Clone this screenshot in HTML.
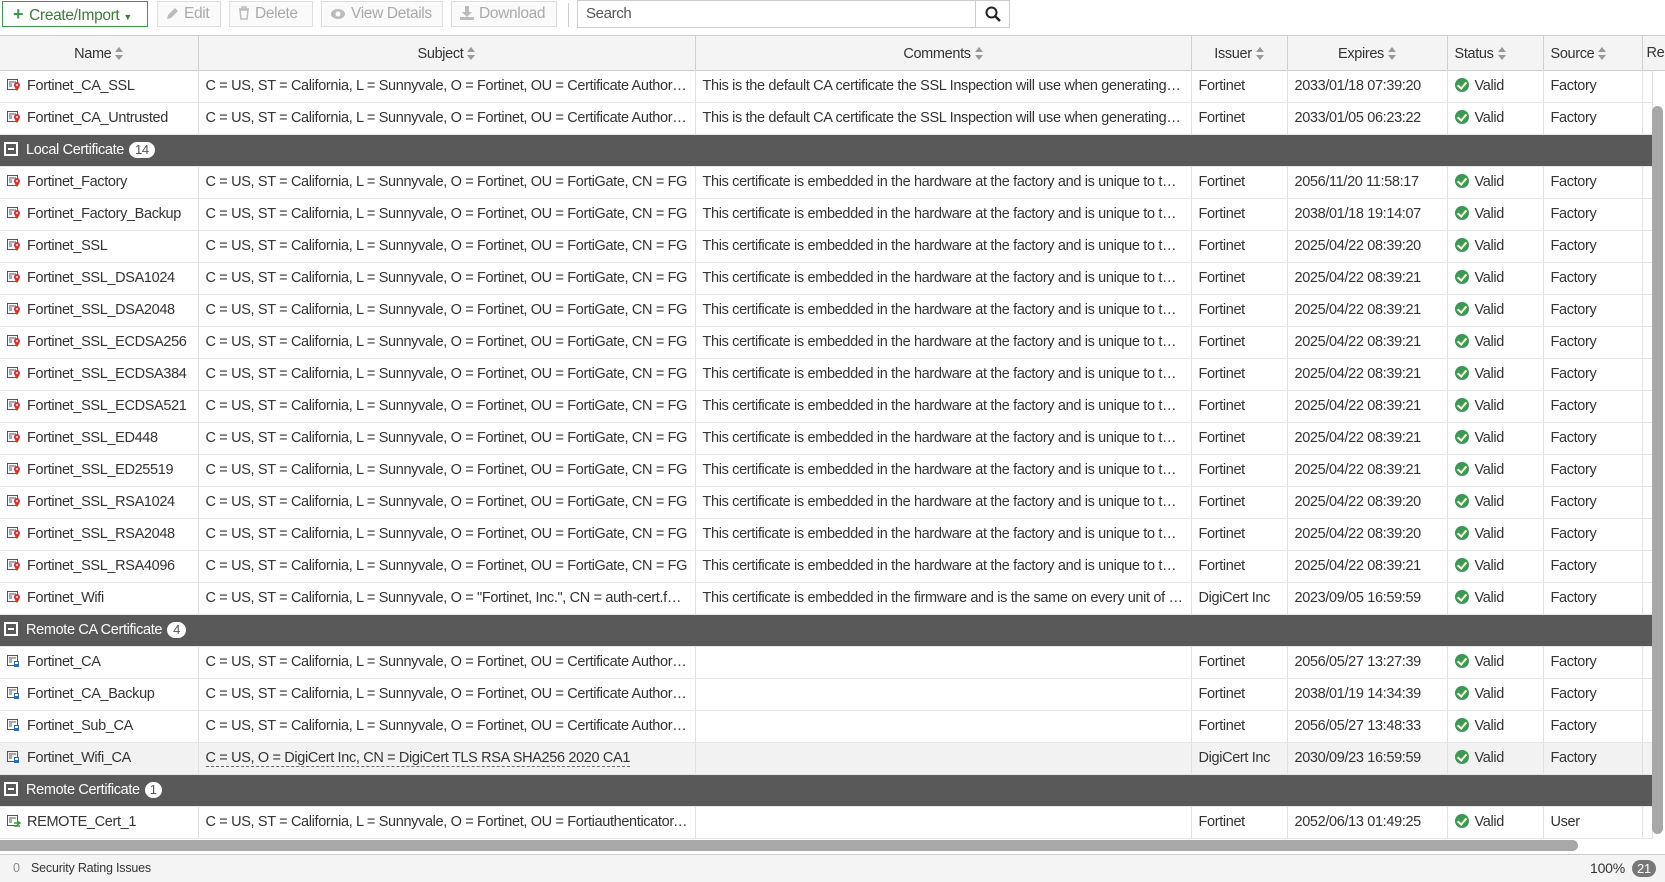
<!DOCTYPE html>
<html><head><meta charset="utf-8"><style>
*{box-sizing:border-box;margin:0;padding:0}
body{width:1665px;height:882px;overflow:hidden;background:#fff;font-family:"Liberation Sans",sans-serif;color:#333;font-size:14.5px;letter-spacing:-0.35px;position:relative}
.tb{position:absolute;top:0;left:0;width:1665px;height:35px;background:#fff}
.btn{position:absolute;top:1px;height:26px;border:1px solid #ddd;background:#fafafa;color:#aaa;font-size:15.5px;line-height:24px;padding-left:8px;white-space:nowrap}
.btn svg{vertical-align:-2px;margin-right:5px}
.hdr{position:absolute;top:35px;left:0;height:36px;width:1665px;background:#f4f4f4;border-top:1px solid #ccc;border-bottom:1px solid #ccc}
table{position:absolute;left:0;border-collapse:collapse;table-layout:fixed}
td,th{height:32px;border-right:1px solid #e0e0e0;border-bottom:1px solid #e6e6e6;white-space:nowrap;overflow:hidden;text-overflow:ellipsis;padding:0 7px;font-weight:normal;text-align:left}
th{height:36px;text-align:center;border-right:1px solid #d0d0d0;border-bottom:none;color:#333;padding-top:2px}
.s{display:inline-block;width:8px;height:13px;vertical-align:-2px;margin-left:4px}
tr.g td{background:#595959;color:#fff;border-right:none;padding-left:4px}
.mb{display:inline-block;width:14px;height:14px;border:2px solid #fff;position:relative;vertical-align:-2px;margin-right:8px}
.mb:after{content:"";position:absolute;left:2px;right:2px;top:4px;height:2px;background:#fff}
.bd{display:inline-block;background:#fff;color:#555;border-radius:9px;font-size:13px;padding:0 6px;line-height:16px;margin-left:5px}
.ic{display:inline-block;width:14px;height:14px;vertical-align:-2px;margin-right:6px}
.v{display:inline-block;width:14px;height:14px;border-radius:50%;background:#3c9a4c;vertical-align:-2px;margin-right:6px;position:relative}
.v:after{content:"";position:absolute;left:4px;top:2px;width:4px;height:7px;border:solid #fff;border-width:0 2px 2px 0;transform:rotate(40deg)}
tr.hl td{background:#f2f2f2}
</style></head><body>
<div class="tb">
<div class="btn" style="left:2px;width:146px;border-color:#3c9a4c;color:#3c7a3c;background:#fff;padding-left:10px"><span style="color:#3c9a4c;font-weight:bold;font-size:18px;margin-right:6px">+</span>Create/Import <span style="font-size:9px">▼</span></div>
<div class="btn" style="left:157px;width:64px"><svg width="13" height="13" viewBox="0 0 13 13"><path d="M1 12l1-4 7-7 3 3-7 7z" fill="#bbb"/></svg>Edit</div>
<div class="btn" style="left:229px;width:84px"><svg width="12" height="14" viewBox="0 0 12 14"><path d="M1 3h10M4 3V1h4v2M2 4h8l-1 9H3z" fill="none" stroke="#bbb" stroke-width="1.5"/></svg>Delete</div>
<div class="btn" style="left:321px;width:122px"><svg width="16" height="12" viewBox="0 0 16 12"><ellipse cx="8" cy="6" rx="7" ry="5" fill="#bbb"/><circle cx="8" cy="6" r="2.5" fill="#fff"/></svg>View Details</div>
<div class="btn" style="left:451px;width:106px"><svg width="14" height="14" viewBox="0 0 14 14"><path d="M5 0h4v6h3l-5 5-5-5h3z" fill="#bbb"/><rect x="0" y="11" width="14" height="3" fill="#bbb"/></svg>Download</div>
<div style="position:absolute;left:568px;top:3px;width:1px;height:24px;background:#ccc"></div>
<div style="position:absolute;left:577px;top:0;width:399px;height:28px;border:1px solid #ccc;color:#555;font-size:15px;line-height:26px;padding-left:8px">Search</div>
<div style="position:absolute;left:975px;top:0;width:35px;height:28px;border:1px solid #ccc"><svg width="16" height="16" viewBox="0 0 16 16" style="position:absolute;left:9px;top:5px"><circle cx="6.5" cy="6.5" r="5" fill="none" stroke="#222" stroke-width="2"/><path d="M10 10l5 5" stroke="#222" stroke-width="2.4"/></svg></div>
</div>
<div class="hdr"></div>
<table style="top:35px;width:1665px">
<colgroup><col style="width:198px"><col style="width:497px"><col style="width:496px"><col style="width:96px"><col style="width:160px"><col style="width:96px"><col style="width:99px"><col style="width:23px"></colgroup>
<tr><th>Name<svg class="s" viewBox="0 0 8 13"><path d="M0 5l4-5 4 5zM0 8l4 5 4-5z" fill="#999"/></svg></th><th>Subject<svg class="s" viewBox="0 0 8 13"><path d="M0 5l4-5 4 5zM0 8l4 5 4-5z" fill="#999"/></svg></th><th>Comments<svg class="s" viewBox="0 0 8 13"><path d="M0 5l4-5 4 5zM0 8l4 5 4-5z" fill="#999"/></svg></th><th>Issuer<svg class="s" viewBox="0 0 8 13"><path d="M0 5l4-5 4 5zM0 8l4 5 4-5z" fill="#999"/></svg></th><th>Expires<svg class="s" viewBox="0 0 8 13"><path d="M0 5l4-5 4 5zM0 8l4 5 4-5z" fill="#999"/></svg></th><th style="text-align:left">Status<svg class="s" viewBox="0 0 8 13"><path d="M0 5l4-5 4 5zM0 8l4 5 4-5z" fill="#999"/></svg></th><th style="text-align:left">Source<svg class="s" viewBox="0 0 8 13"><path d="M0 5l4-5 4 5zM0 8l4 5 4-5z" fill="#999"/></svg></th><th style="text-align:left;padding:0 4px;text-overflow:clip">Re</th></tr>
</table>
<svg width="0" height="0" style="position:absolute"><defs>
<symbol id="lc" viewBox="0 0 14 14"><rect x="0.5" y="1.5" width="10" height="10" fill="none" stroke="#555"/><path d="M2 4h7M2 6h3M2 8h3" stroke="#555"/><path d="M10 4a3 3 0 0 1 3 3c0 2-3 6-3 6s-3-4-3-6a3 3 0 0 1 3-3z" fill="#e03030"/><circle cx="10" cy="7" r="1" fill="#fff"/></symbol>
<symbol id="rc" viewBox="0 0 14 14"><rect x="0.5" y="1.5" width="10" height="10" fill="none" stroke="#555"/><path d="M2 4h7M2 6h3M2 8h3" stroke="#555"/><path d="M7 7h5v6H7z" fill="#2a6db5"/><path d="M8 8h3v2H8z" fill="#fff"/></symbol>
<symbol id="rr" viewBox="0 0 14 14"><rect x="0.5" y="1.5" width="10" height="10" fill="none" stroke="#555"/><path d="M2 4h7M2 6h3M2 8h3" stroke="#555"/><path d="M7 9h6M10 7l3 2-3 2M13 12H7" stroke="#3c9a4c" stroke-width="1.5" fill="none"/></symbol>
</defs></svg>
<table style="top:70px;width:1652px">
<colgroup><col style="width:198px"><col style="width:497px"><col style="width:496px"><col style="width:96px"><col style="width:160px"><col style="width:96px"><col style="width:99px"><col style="width:10px"></colgroup>
<tr><td><svg class="ic"><use href="#lc"/></svg>Fortinet_CA_SSL</td><td>C = US, ST = California, L = Sunnyvale, O = Fortinet, OU = Certificate Authority, CN = FG</td><td>This is the default CA certificate the SSL Inspection will use when generating new certificates</td><td>Fortinet</td><td>2033/01/18 07:39:20</td><td><span class="v"></span>Valid</td><td>Factory</td><td></td></tr>
<tr><td><svg class="ic"><use href="#lc"/></svg>Fortinet_CA_Untrusted</td><td>C = US, ST = California, L = Sunnyvale, O = Fortinet, OU = Certificate Authority, CN = FG</td><td>This is the default CA certificate the SSL Inspection will use when generating new certificates</td><td>Fortinet</td><td>2033/01/05 06:23:22</td><td><span class="v"></span>Valid</td><td>Factory</td><td></td></tr>
<tr class="g"><td colspan="8"><span class="mb"></span>Local Certificate<span class="bd">14</span></td></tr>
<tr><td><svg class="ic"><use href="#lc"/></svg>Fortinet_Factory</td><td>C = US, ST = California, L = Sunnyvale, O = Fortinet, OU = FortiGate, CN = FG</td><td>This certificate is embedded in the hardware at the factory and is unique to this unit</td><td>Fortinet</td><td>2056/11/20 11:58:17</td><td><span class="v"></span>Valid</td><td>Factory</td><td></td></tr>
<tr><td><svg class="ic"><use href="#lc"/></svg>Fortinet_Factory_Backup</td><td>C = US, ST = California, L = Sunnyvale, O = Fortinet, OU = FortiGate, CN = FG</td><td>This certificate is embedded in the hardware at the factory and is unique to this unit</td><td>Fortinet</td><td>2038/01/18 19:14:07</td><td><span class="v"></span>Valid</td><td>Factory</td><td></td></tr>
<tr><td><svg class="ic"><use href="#lc"/></svg>Fortinet_SSL</td><td>C = US, ST = California, L = Sunnyvale, O = Fortinet, OU = FortiGate, CN = FG</td><td>This certificate is embedded in the hardware at the factory and is unique to this unit</td><td>Fortinet</td><td>2025/04/22 08:39:20</td><td><span class="v"></span>Valid</td><td>Factory</td><td></td></tr>
<tr><td><svg class="ic"><use href="#lc"/></svg>Fortinet_SSL_DSA1024</td><td>C = US, ST = California, L = Sunnyvale, O = Fortinet, OU = FortiGate, CN = FG</td><td>This certificate is embedded in the hardware at the factory and is unique to this unit</td><td>Fortinet</td><td>2025/04/22 08:39:21</td><td><span class="v"></span>Valid</td><td>Factory</td><td></td></tr>
<tr><td><svg class="ic"><use href="#lc"/></svg>Fortinet_SSL_DSA2048</td><td>C = US, ST = California, L = Sunnyvale, O = Fortinet, OU = FortiGate, CN = FG</td><td>This certificate is embedded in the hardware at the factory and is unique to this unit</td><td>Fortinet</td><td>2025/04/22 08:39:21</td><td><span class="v"></span>Valid</td><td>Factory</td><td></td></tr>
<tr><td><svg class="ic"><use href="#lc"/></svg>Fortinet_SSL_ECDSA256</td><td>C = US, ST = California, L = Sunnyvale, O = Fortinet, OU = FortiGate, CN = FG</td><td>This certificate is embedded in the hardware at the factory and is unique to this unit</td><td>Fortinet</td><td>2025/04/22 08:39:21</td><td><span class="v"></span>Valid</td><td>Factory</td><td></td></tr>
<tr><td><svg class="ic"><use href="#lc"/></svg>Fortinet_SSL_ECDSA384</td><td>C = US, ST = California, L = Sunnyvale, O = Fortinet, OU = FortiGate, CN = FG</td><td>This certificate is embedded in the hardware at the factory and is unique to this unit</td><td>Fortinet</td><td>2025/04/22 08:39:21</td><td><span class="v"></span>Valid</td><td>Factory</td><td></td></tr>
<tr><td><svg class="ic"><use href="#lc"/></svg>Fortinet_SSL_ECDSA521</td><td>C = US, ST = California, L = Sunnyvale, O = Fortinet, OU = FortiGate, CN = FG</td><td>This certificate is embedded in the hardware at the factory and is unique to this unit</td><td>Fortinet</td><td>2025/04/22 08:39:21</td><td><span class="v"></span>Valid</td><td>Factory</td><td></td></tr>
<tr><td><svg class="ic"><use href="#lc"/></svg>Fortinet_SSL_ED448</td><td>C = US, ST = California, L = Sunnyvale, O = Fortinet, OU = FortiGate, CN = FG</td><td>This certificate is embedded in the hardware at the factory and is unique to this unit</td><td>Fortinet</td><td>2025/04/22 08:39:21</td><td><span class="v"></span>Valid</td><td>Factory</td><td></td></tr>
<tr><td><svg class="ic"><use href="#lc"/></svg>Fortinet_SSL_ED25519</td><td>C = US, ST = California, L = Sunnyvale, O = Fortinet, OU = FortiGate, CN = FG</td><td>This certificate is embedded in the hardware at the factory and is unique to this unit</td><td>Fortinet</td><td>2025/04/22 08:39:21</td><td><span class="v"></span>Valid</td><td>Factory</td><td></td></tr>
<tr><td><svg class="ic"><use href="#lc"/></svg>Fortinet_SSL_RSA1024</td><td>C = US, ST = California, L = Sunnyvale, O = Fortinet, OU = FortiGate, CN = FG</td><td>This certificate is embedded in the hardware at the factory and is unique to this unit</td><td>Fortinet</td><td>2025/04/22 08:39:20</td><td><span class="v"></span>Valid</td><td>Factory</td><td></td></tr>
<tr><td><svg class="ic"><use href="#lc"/></svg>Fortinet_SSL_RSA2048</td><td>C = US, ST = California, L = Sunnyvale, O = Fortinet, OU = FortiGate, CN = FG</td><td>This certificate is embedded in the hardware at the factory and is unique to this unit</td><td>Fortinet</td><td>2025/04/22 08:39:20</td><td><span class="v"></span>Valid</td><td>Factory</td><td></td></tr>
<tr><td><svg class="ic"><use href="#lc"/></svg>Fortinet_SSL_RSA4096</td><td>C = US, ST = California, L = Sunnyvale, O = Fortinet, OU = FortiGate, CN = FG</td><td>This certificate is embedded in the hardware at the factory and is unique to this unit</td><td>Fortinet</td><td>2025/04/22 08:39:21</td><td><span class="v"></span>Valid</td><td>Factory</td><td></td></tr>
<tr><td><svg class="ic"><use href="#lc"/></svg>Fortinet_Wifi</td><td>C = US, ST = California, L = Sunnyvale, O = "Fortinet, Inc.", CN = auth-cert.fortinet.com</td><td>This certificate is embedded in the firmware and is the same on every unit of this model</td><td>DigiCert Inc</td><td>2023/09/05 16:59:59</td><td><span class="v"></span>Valid</td><td>Factory</td><td></td></tr>
<tr class="g"><td colspan="8"><span class="mb"></span>Remote CA Certificate<span class="bd">4</span></td></tr>
<tr><td><svg class="ic"><use href="#rc"/></svg>Fortinet_CA</td><td>C = US, ST = California, L = Sunnyvale, O = Fortinet, OU = Certificate Authority, CN = fortinet-ca</td><td></td><td>Fortinet</td><td>2056/05/27 13:27:39</td><td><span class="v"></span>Valid</td><td>Factory</td><td></td></tr>
<tr><td><svg class="ic"><use href="#rc"/></svg>Fortinet_CA_Backup</td><td>C = US, ST = California, L = Sunnyvale, O = Fortinet, OU = Certificate Authority, CN = fortinet-ca</td><td></td><td>Fortinet</td><td>2038/01/19 14:34:39</td><td><span class="v"></span>Valid</td><td>Factory</td><td></td></tr>
<tr><td><svg class="ic"><use href="#rc"/></svg>Fortinet_Sub_CA</td><td>C = US, ST = California, L = Sunnyvale, O = Fortinet, OU = Certificate Authority, CN = fortinet-subca</td><td></td><td>Fortinet</td><td>2056/05/27 13:48:33</td><td><span class="v"></span>Valid</td><td>Factory</td><td></td></tr>
<tr class="hl"><td><svg class="ic"><use href="#rc"/></svg>Fortinet_Wifi_CA</td><td><span style="border-bottom:1px dashed #666">C = US, O = DigiCert Inc, CN = DigiCert TLS RSA SHA256 2020 CA1</span></td><td></td><td>DigiCert Inc</td><td>2030/09/23 16:59:59</td><td><span class="v"></span>Valid</td><td>Factory</td><td></td></tr>
<tr class="g"><td colspan="8"><span class="mb"></span>Remote Certificate<span class="bd" style="padding:0 5px">1</span></td></tr>
<tr><td><svg class="ic"><use href="#rr"/></svg>REMOTE_Cert_1</td><td>C = US, ST = California, L = Sunnyvale, O = Fortinet, OU = Fortiauthenticator, CN = FAC</td><td></td><td>Fortinet</td><td>2052/06/13 01:49:25</td><td><span class="v"></span>Valid</td><td>User</td><td></td></tr>
</table>
<div style="position:absolute;left:1652px;top:106px;width:11px;height:728px;background:#a8a8a8;border-radius:6px"></div>
<div style="position:absolute;left:0;top:840px;width:1578px;height:11px;background:#a8a8a8;border-radius:0 6px 6px 0"></div>
<div style="position:absolute;left:0;top:854px;width:1665px;height:28px;background:#f4f4f4;border-top:1px solid #ccc;font-size:12.5px;line-height:26px;color:#333;letter-spacing:-0.2px">
<span style="position:absolute;left:13px;color:#888">0</span><span style="position:absolute;left:31px">Security Rating Issues</span>
<span style="position:absolute;left:1590px;font-size:14px">100%</span><span style="position:absolute;left:1632px;top:5px;background:#777;color:#fff;border-radius:9px;padding:0 5px;line-height:17px;font-size:13px">21</span>
</div>
</body></html>
